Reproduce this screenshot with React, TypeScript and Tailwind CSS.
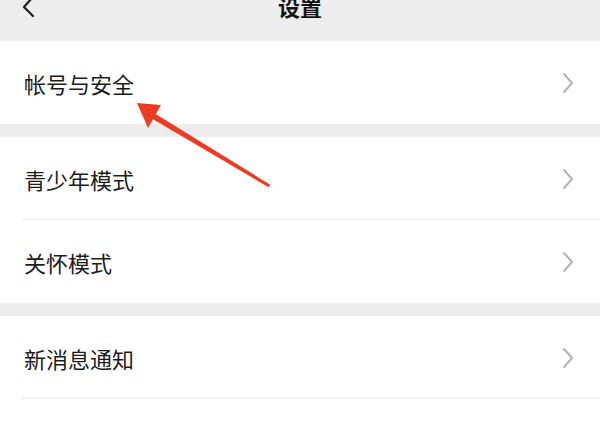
import React from "react";

const font = { fontFamily: '"Noto Sans CJK SC", "Noto Sans", sans-serif' };

function Chevron() {
  return (
    <svg width="14" height="22" viewBox="0 0 14 22" className="shrink-0">
      <path d="M3 2 L11 11 L3 20" fill="none" stroke="#b3b3b3" strokeWidth="2" strokeLinecap="round" strokeLinejoin="round" />
    </svg>
  );
}

function Row({ label, divider }: { label: string; divider?: boolean }) {
  return (
    <div className="relative flex h-[83px] items-center justify-between bg-white pl-[24px] pr-[25px]">
      <span className="text-[22px] leading-none text-[#1c1c1c]">{label}</span>
      <Chevron />
      {divider && <div className="absolute bottom-0 left-[22px] right-0 h-px bg-[#ececec]" />}
    </div>
  );
}

export default function App() {
  return (
    <div className="relative h-[427px] w-[600px] overflow-hidden bg-[#ededed]" style={font}>
      <div className="relative flex h-[41px] items-end justify-center bg-[#ededed]">
        <svg width="16" height="24" viewBox="0 0 16 24" className="absolute left-[20px] top-[-5px]">
          <path d="M12 3 L4 12 L13 21" fill="none" stroke="#1f1f1f" strokeWidth="2.2" strokeLinecap="round" strokeLinejoin="round" />
        </svg>
        <span className="mb-[24px] text-[22px] font-bold leading-none text-[#111]">设置</span>
      </div>
      <div className="flex flex-col">
        <Row label="帐号与安全" />
        <div className="h-[13px]" />
        <Row label="青少年模式" divider />
        <Row label="关怀模式" />
        <div className="h-[13px]" />
        <Row label="新消息通知" divider />
        <div className="h-[30px] bg-white" />
      </div>
      <svg className="pointer-events-none absolute left-0 top-0" width="600" height="427" viewBox="0 0 600 427">
        <polygon points="148.4,116.6 151.6,111.4 270.3,184.7 268.7,187.3" fill="#ee3b24" />
        <polygon points="137,103 161,105 148,128" fill="#ee3b24" />
      </svg>
    </div>
  );
}
